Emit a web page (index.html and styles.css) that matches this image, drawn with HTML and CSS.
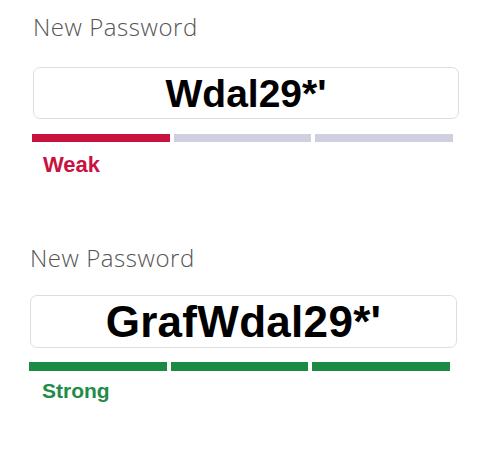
FILE: index.html
```html
<!DOCTYPE html>
<html>
<head>
<meta charset="utf-8">
<link rel="stylesheet" href="styles.css">
</head>
<body>
<section class="field field-weak">
  <div class="label">New Password</div>
  <div class="input"><span class="value value-sm">Wdal29*'</span></div>
  <div class="meter">
    <span class="seg seg-red"></span>
    <span class="seg seg-grey"></span>
    <span class="seg seg-grey"></span>
  </div>
  <div class="strength strength-weak">Weak</div>
</section>
<section class="field field-strong">
  <div class="label">New Password</div>
  <div class="input"><span class="value value-lg">GrafWdal29*'</span></div>
  <div class="meter">
    <span class="seg seg-green"></span>
    <span class="seg seg-green"></span>
    <span class="seg seg-green"></span>
  </div>
  <div class="strength strength-ok">Strong</div>
</section>
</body>
</html>
```
FILE: styles.css
```css
html, body {
  margin: 0;
  padding: 0;
  background: #ffffff;
}
body {
  width: 500px;
  height: 458px;
  overflow: hidden;
}
.field {
  display: flex;
  flex-direction: column;
}
.field-weak {
  padding: 13px 0 0 33px;
  width: 426px;
}
.field-strong {
  padding: 66px 0 0 30px;
  width: 427px;
}
.label {
  font-family: "Open Sans", "Liberation Sans", sans-serif;
  font-weight: 300;
  font-size: 24px;
  line-height: 28px;
  color: #555555;
  letter-spacing: 0.55px;
}
.input {
  box-sizing: border-box;
  height: 52px;
  margin-top: 26px;
  border: 1.5px solid #dedee2;
  border-radius: 7px;
  display: flex;
  align-items: center;
  justify-content: center;
  background: #fff;
}
.field-strong .input {
  height: 53px;
  margin-top: 23px;
}
.value {
  font-family: "Liberation Sans", Arial, sans-serif;
  font-weight: 700;
  color: #000;
  line-height: 1;
}
.value-sm { font-size: 39px; }
.value-lg { font-size: 44px; letter-spacing: 0.3px; }
.meter {
  display: flex;
  gap: 4px;
  margin-top: 15px;
  margin-left: -1px;
  width: 421px;
}
.field-strong .meter {
  margin-top: 14px;
}
.seg {
  flex: 1;
  height: 8px;
}
.field-strong .seg { height: 9px; }
.seg-red { background: #c8123f; }
.seg-grey { background: #cfd0dd; }
.seg-green { background: #1b8a42; }
.strength {
  font-family: "Liberation Sans", Arial, sans-serif;
  font-weight: 700;
  font-size: 22px;
  line-height: 26px;
  margin-top: 10px;
  margin-left: 10px;
}
.strength-weak { color: #c8123f; }
.strength-ok { color: #1f8c48; margin-left: 12px; font-size: 21px; margin-top: 7px; }
```
